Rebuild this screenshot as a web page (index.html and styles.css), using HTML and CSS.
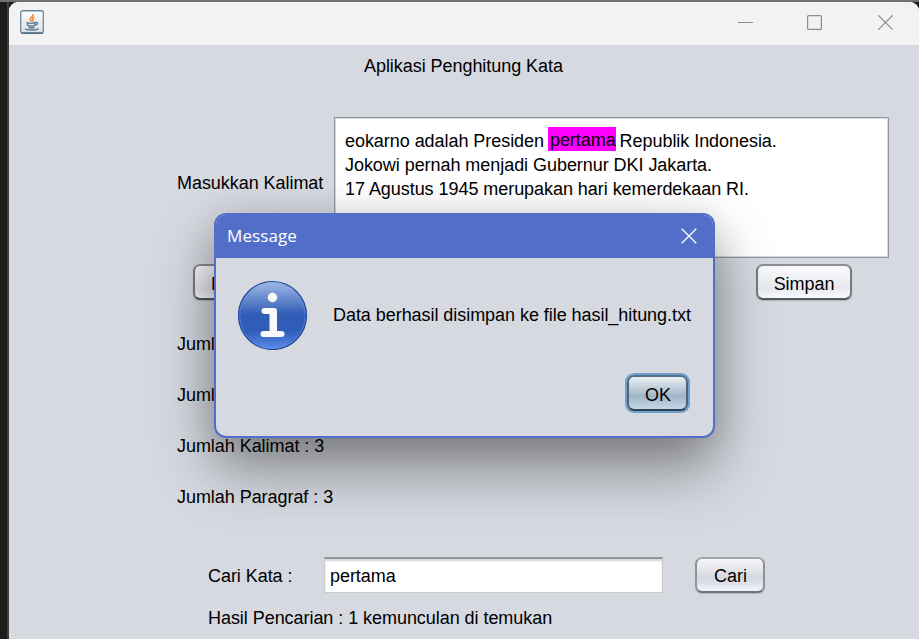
FILE: index.html
```html
<!DOCTYPE html>
<html lang="id">
<head>
<meta charset="utf-8">
<title>Aplikasi Penghitung Kata</title>
<link rel="stylesheet" href="styles.css">
</head>
<body>
<main class="window">
  <header class="titlebar">
    <svg class="java" viewBox="0 0 24 24" width="24" height="24">
      <defs><linearGradient id="tile" x2="0" y2="1"><stop stop-color="#fff"/><stop offset="1" stop-color="#dedede"/></linearGradient></defs>
      <rect x=".75" y=".75" width="22.5" height="22.5" rx="2" fill="url(#tile)" stroke="#66869d" stroke-width="1.3"/>
      <path d="M1.5 23h21" stroke="#37566d"/>
      <path d="M12.8 4c1.5 2.2-3.2 3.500-2.600 5.500.2.800 1 1.300 1.500 2.300M14.500 7c-2.600 1.200-2.200 2-1.500 3 .5.800 0 1.300-.5 1.800" fill="none" stroke="#ed8a35" stroke-width="1.500"/>
      <path d="M6.500 12.500c2 1 6.500 1 9 0M7.300 13.500c0 2 .7 2.300 2 2.500h4c1.500-.3 2-1 2-2.500M15.500 12.500c3-.8 2.500 2.300-.5 2.700M8.500 17.500c2 .6 4 .6 6 0M5 18.500c1 2 12 2 13.500 0" fill="none" stroke="#587f9e" stroke-width="1.400"/>
    </svg>
    <svg class="controls" width="156" height="16" viewBox="0 0 156 16" fill="none" stroke="#8c8c8c" stroke-width="1.200">
      <path d="M0 7.500h15"/>
      <rect x="69.600" y=".600" width="13.800" height="13.800" rx="1"/>
      <path d="M140.300.3l14.400 14.400M154.700.3l-14.400 14.400"/>
    </svg>
  </header>
  <h1 class="heading">Aplikasi Penghitung Kata</h1>
  <section class="entry">
    <label class="entry-label">Masukkan Kalimat</label>
    <div class="editor">
      <p>eokarno adalah Presiden <mark>pertama</mark> Republik Indonesia.</p>
      <p>Jokowi pernah menjadi Gubernur DKI Jakarta.</p>
      <p>17 Agustus 1945 merupakan hari kemerdekaan RI.</p>
    </div>
  </section>
  <div class="actions">
    <button class="btn count">Hitung</button>
    <button class="btn save">Simpan</button>
  </div>
  <section class="stats">
    <p>Jumlah Kata : 18</p>
    <p>Jumlah Karakter : 128</p>
    <p>Jumlah Kalimat : 3</p>
    <p>Jumlah Paragraf : 3</p>
  </section>
  <section class="search">
    <label class="search-label">Cari Kata :</label>
    <div class="field">pertama</div>
    <button class="btn find">Cari</button>
  </section>
  <p class="result">Hasil Pencarian : 1 kemunculan di temukan</p>
</main>
<section class="dialog">
  <header class="dialog-bar">
    <span>Message</span>
    <svg width="16" height="16" viewBox="0 0 16 16" stroke="#fff" stroke-width="1.300"><path d="M.7.7l14.600 14.600M15.300.7L.7 15.300"/></svg>
  </header>
  <div class="dialog-body">
    <svg width="70" height="70" viewBox="0 0 70 70">
      <defs><linearGradient id="blue" x2="0" y2="1"><stop stop-color="#a3b9e6"/><stop offset=".15" stop-color="#7f9ed8"/><stop offset=".48" stop-color="#315eb5"/><stop offset=".72" stop-color="#2e5cb8"/><stop offset="1" stop-color="#5c8ae8"/></linearGradient></defs>
      <circle cx="34.500" cy="35.500" r="34" fill="url(#blue)" stroke="#1f479b" stroke-width="1.200"/>
      <circle cx="34.500" cy="35.500" r="32.800" fill="none" stroke="#7198e0" stroke-opacity=".5"/>
      <circle cx="34.500" cy="17.500" r="4.700" fill="#fafafa"/>
      <path d="M26.500 28h9.500q3 0 3 3v20h4.500a3 3 0 0 1 0 6H25.500a3 3 0 0 1 0-6h6v-17h-5a3 3 0 0 1 0-6z" fill="#fafafa"/>
    </svg>
    <p>Data berhasil disimpan ke file hasil_hitung.txt</p>
  </div>
  <div class="dialog-actions"><button class="btn ok">OK</button></div>
</section>
</body>
</html>
```
FILE: styles.css
```css
* { box-sizing: border-box; }
body {
  margin: 0;
  height: 639px;
  overflow: hidden;
  padding: 2px 0 0 9px;
  background: linear-gradient(#707070, #707070) 0 0 / 100% 2px no-repeat, linear-gradient(90deg, #1c1c1c 0 7px, #403e3b 7px 9px, #1c1c1c 9px);
  font: 18px/24px "Liberation Sans", Arial, sans-serif;
  letter-spacing: -.05px;
  color: #000;
}
h1, p { margin: 0; font: inherit; white-space: nowrap; }
.window {
  height: 637px;
  background: #d6d9e0;
  border-radius: 9px 9px 0 0;
  overflow: hidden;
}
.titlebar {
  height: 43px;
  padding: 0 25px 4px 11px;
  background: #f2f2f2;
  display: flex;
  align-items: center;
  justify-content: space-between;
}
.controls { margin-top: 2px; }
.heading { height: 72px; padding: 9px 0 0 355px; }
.entry { display: flex; height: 141px; padding-left: 168px; }
.entry-label { width: 157px; padding-top: 54px; white-space: nowrap; }
.editor {
  width: 555px;
  padding: 10px 10px 9px;
  background: #fff;
  border: 1px solid #9297a1;
  box-shadow: inset 0 0 0 1px #d5d8de;
}
.editor p { height: 24px; line-height: 26px; }
mark {
  display: inline-block;
  height: 24px;
  margin: -1px -1px 0 -1px;
  padding: 0 0 0 2px;
  vertical-align: top;
  background: #f0f;
  color: #000;
}
.btn {
  height: 36px;
  padding: 0;
  border: 2px solid #7b7e83;
  border-color: #8b8e94 #777a80 #55585e;
  border-radius: 7px;
  background: linear-gradient(#fbfbfc, #eceef2 50%, #e7e9ee 70%, #fafbff);
  box-shadow: 0 1px 1px #aeb2b9;
  font: inherit;
  letter-spacing: inherit;
  color: #000;
}
.actions { display: flex; justify-content: space-between; padding: 6px 67px 0 184px; height: 61px; }
.count { width: 92px; padding: 4px 0 0 16px; text-align: left; }
.save { width: 96px; padding-top: 4px; }
.stats { height: 238px; padding-left: 168px; line-height: 51px; }
.search { display: flex; height: 36px; padding-left: 199px; line-height: 38px; }
.search-label { width: 116px; }
.field {
  width: 339px;
  height: 36px;
  margin-right: 32px;
  padding-left: 5px;
  line-height: 35px;
  background: #fff;
  border: 1px solid #c9cbcf;
  border-top: 2px solid #929499;
  box-shadow: inset 0 2px 2px #d5d6d8;
}
.find {
  width: 70px;
  padding: 2px 0 0 1px;
  line-height: 30px;
  border-color: #a1a4a9 #8f9297 #707379;
  background: linear-gradient(#f7f7f8, #d6d9df 55%, #d9dce4 70%, #f3f6ff);
}
.result { padding: 13px 0 0 199px; }
.dialog {
  position: absolute;
  left: 214px;
  top: 213px;
  width: 501px;
  height: 225px;
  border: 2px solid #536ec9;
  border-radius: 12px;
  background: #d6d9e0;
  box-shadow: 0 30px 60px rgba(0, 0, 0, .4), 0 4px 36px rgba(0, 0, 0, .12);
  overflow: hidden;
}
.dialog-bar {
  height: 43px;
  padding: 0 16px 2px 11px;
  background: #536ec9;
  color: #fff;
  display: flex;
  align-items: center;
  justify-content: space-between;
  font: 17px/24px "Open Sans", "Noto Sans", sans-serif;
  letter-spacing: .1px;
}
.dialog-body { display: flex; align-items: center; gap: 25px; height: 113px; padding-left: 22px; }
.dialog-actions { display: flex; justify-content: flex-end; padding: 4px 25px 0 0; }
.ok {
  width: 61px;
  padding: 4px 0 0 1px;
  border-color: #587087 #4d657c #2f4255;
  background: linear-gradient(#e9eff4, #b4c4d2 45%, #a1b5c6 60%, #c5d9ec);
  box-shadow: 0 0 0 2px #6e9fcd;
}
```
